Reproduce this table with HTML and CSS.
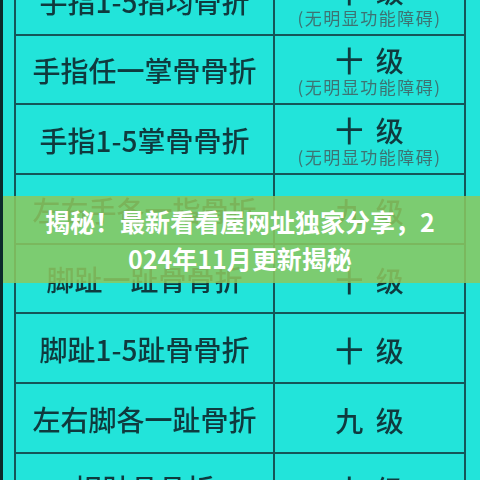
FILE: index.html
```html
<!DOCTYPE html>
<html lang="zh-CN">
<head>
<meta charset="utf-8">
<title>揭秘</title>
<link rel="stylesheet" href="styles.css">
</head>
<body>
<div class="page">
  <div class="sheet">
    <div class="table">
      <div class="cell name">手指1-5指均骨折</div>
      <div class="cell grade"><span class="lv">十 级</span><span class="note">(无明显功能障碍)</span></div>
      <div class="cell name">手指任一掌骨骨折</div>
      <div class="cell grade"><span class="lv">十 级</span><span class="note">(无明显功能障碍)</span></div>
      <div class="cell name">手指1-5掌骨骨折</div>
      <div class="cell grade"><span class="lv">十 级</span><span class="note">(无明显功能障碍)</span></div>
      <div class="cell name">左右手各一指骨折</div>
      <div class="cell grade"><span class="lv">九 级</span></div>
      <div class="cell name">脚趾一趾骨骨折</div>
      <div class="cell grade"><span class="lv">十 级</span></div>
      <div class="cell name">脚趾1-5趾骨骨折</div>
      <div class="cell grade"><span class="lv">十 级</span></div>
      <div class="cell name">左右脚各一趾骨折</div>
      <div class="cell grade"><span class="lv">九 级</span></div>
      <div class="cell name">拇趾骨骨折</div>
      <div class="cell grade"><span class="lv">十 级</span></div>
    </div>
  </div>
  <div class="banner">
    <h1 class="title">揭秘！最新看看屋网址独家分享，2024年11月更新揭秘</h1>
  </div>
</div>
</body>
</html>
```

FILE: styles.css
```css
* { box-sizing: border-box; }
html, body { margin: 0; padding: 0; }
body { background: #22e4da; }

.page {
  position: relative;
  width: 480px;
  height: 480px;
  overflow: hidden;
  background: #22e4da;
  border-left: 3px solid #0b2a2a;
  font-family: "Noto Sans CJK SC", "Noto Sans", sans-serif;
}

.sheet {
  padding-left: 11px;
  margin-top: -34px;
}

.table {
  width: 452px;
  display: grid;
  grid-template-columns: 259px 1fr;
  grid-auto-rows: 69.67px;
  border-left: 2px solid #145558;
  border-right: 2px solid #145558;
  filter: blur(0.4px);
}

.cell {
  border-bottom: 2px solid #145558;
  display: flex;
  align-items: center;
  justify-content: center;
}

.name {
  border-right: 2px solid #145558;
  font-size: 28px;
  font-weight: 500;
  color: #0f3a3e;
  padding-top: 2px;
}

.grade {
  flex-direction: column;
  padding-top: 4px;
}

.lv {
  font-size: 28px;
  line-height: 32px;
  font-weight: 500;
  color: #0f3a3e;
  letter-spacing: 3px;
  padding-left: 3px;
}

.note {
  font-size: 17px;
  line-height: 22px;
  color: #3d7373;
  letter-spacing: 1.5px;
}

.banner {
  position: absolute;
  left: -3px;
  right: 0;
  top: 196px;
  height: 87px;
  background: rgba(140, 200, 95, 0.86);
  display: flex;
  align-items: center;
  justify-content: center;
}

.title {
  margin: 0;
  width: 400px;
  text-align: center;
  color: #ffffff;
  font-size: 25px;
  line-height: 37px;
  font-weight: 700;
  word-break: break-all;
}
```
